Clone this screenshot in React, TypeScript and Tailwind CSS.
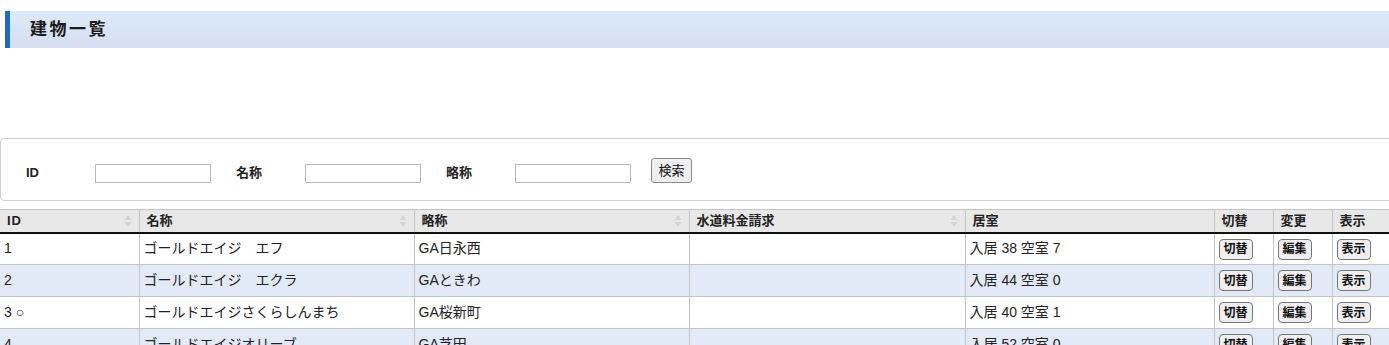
const rows = [
  { id: '1', name: 'ゴールドエイジ　エフ', short: 'GA日永西', water: '', room: '入居 38 空室 7' },
  { id: '2', name: 'ゴールドエイジ　エクラ', short: 'GAときわ', water: '', room: '入居 44 空室 0' },
  { id: '3 ○', name: 'ゴールドエイジさくらしんまち', short: 'GA桜新町', water: '', room: '入居 40 空室 1' },
  { id: '4', name: 'ゴールドエイジオリーブ', short: 'GA芝田', water: '', room: '入居 52 空室 0' },
];

const SortIcon = () => (
  <svg width="8" height="14" viewBox="0 0 8 14" className="shrink-0">
    <path d="M4 1 L7.5 6 L0.5 6 Z" fill="#d4d4d4" />
    <path d="M4 13 L7.5 8 L0.5 8 Z" fill="#d4d4d4" />
  </svg>
);

const CellButton = ({ label }: { label: string }) => (
  <button className="h-[21px] w-[34px] rounded-[4px] border border-[#767676] bg-[#efefef] text-[12px] font-bold leading-none text-[#111]">
    {label}
  </button>
);

const SearchField = ({ label }: { label: string }) => (
  <div className="flex w-[210px] shrink-0 items-center">
    <span className="w-[94px] shrink-0 pl-[25px] text-[13px] font-bold text-[#222]">{label}</span>
    <input className="h-[19px] w-[116px] shrink-0 border border-[#b8b8b8] bg-white outline-none" />
  </div>
);

export default function App() {
  const font = { fontFamily: '"Liberation Sans", Arial, "Noto Sans CJK JP", sans-serif' };
  const headCols = [
    { label: 'ID', w: 'w-[139px]', sort: true },
    { label: '名称', w: 'w-[275px]', sort: true },
    { label: '略称', w: 'w-[275px]', sort: true },
    { label: '水道料金請求', w: 'w-[276px]', sort: true },
    { label: '居室', w: 'w-[249px]', sort: false },
    { label: '切替', w: 'w-[59px]', sort: false },
    { label: '変更', w: 'w-[59px]', sort: false },
    { label: '表示', w: 'w-[120px]', sort: false },
  ];

  return (
    <div className="h-[345px] w-[1389px] overflow-hidden bg-white text-[#222]" style={font}>
      <div className="pt-[11px]">
        <div className="ml-[5px] flex h-[37px] items-center border-l-[5px] border-[#1a6cc8] bg-gradient-to-b from-[#dbeaf9] to-[#d6dff1] pl-[20px]">
          <h1 className="text-[17px] font-bold tracking-[2.5px] text-[#1a1a1a]">建物一覧</h1>
        </div>
      </div>

      <div className="mt-[90px] flex h-[63px] w-[1400px] items-center rounded-[4px] border border-[#d0d0d0] pt-[7px]">
        <SearchField label="ID" />
        <SearchField label="名称" />
        <SearchField label="略称" />
        <button className="ml-[20px] -mt-[5px] h-[25px] w-[41px] shrink-0 rounded-[3px] border border-[#8a8a8a] bg-[#efefef] text-[13px] text-[#111]">
          検索
        </button>
      </div>

      <table className="mt-[8px] w-[1452px] table-fixed border-collapse text-[14px]">
        <thead>
          <tr className="h-[23px] border-t border-[#c4c4c4] bg-[#e8e8e8]">
            {headCols.map((c, i) => (
              <th
                key={c.label}
                className={`${c.w} border-b-2 border-b-[#111] ${i > 0 ? 'border-l border-l-[#c4c4c4]' : ''} px-[7px] text-left text-[13px] font-bold text-[#222]`}
              >
                <div className="flex items-center justify-between">
                  <span className={i === 0 ? 'tracking-[1px]' : ''}>{c.label}</span>
                  {c.sort && <SortIcon />}
                </div>
              </th>
            ))}
          </tr>
        </thead>
        <tbody>
          {rows.map((r, i) => (
            <tr key={r.id} className={`h-[32px] border-b border-[#c4c4c4] ${i % 2 === 1 ? 'bg-[#e2e9f7]' : 'bg-white'}`}>
              <td className="px-[4px]">{r.id}</td>
              <td className="border-l border-[#c4c4c4] px-[4px]">{r.name}</td>
              <td className="border-l border-[#c4c4c4] px-[4px]">{r.short}</td>
              <td className="border-l border-[#c4c4c4] px-[4px]">{r.water}</td>
              <td className="border-l border-[#c4c4c4] px-[4px]">{r.room}</td>
              <td className="border-l border-[#c4c4c4] px-[4px]">
                <CellButton label="切替" />
              </td>
              <td className="border-l border-[#c4c4c4] px-[4px]">
                <CellButton label="編集" />
              </td>
              <td className="border-l border-[#c4c4c4] px-[4px]">
                <CellButton label="表示" />
              </td>
            </tr>
          ))}
        </tbody>
      </table>
    </div>
  );
}
